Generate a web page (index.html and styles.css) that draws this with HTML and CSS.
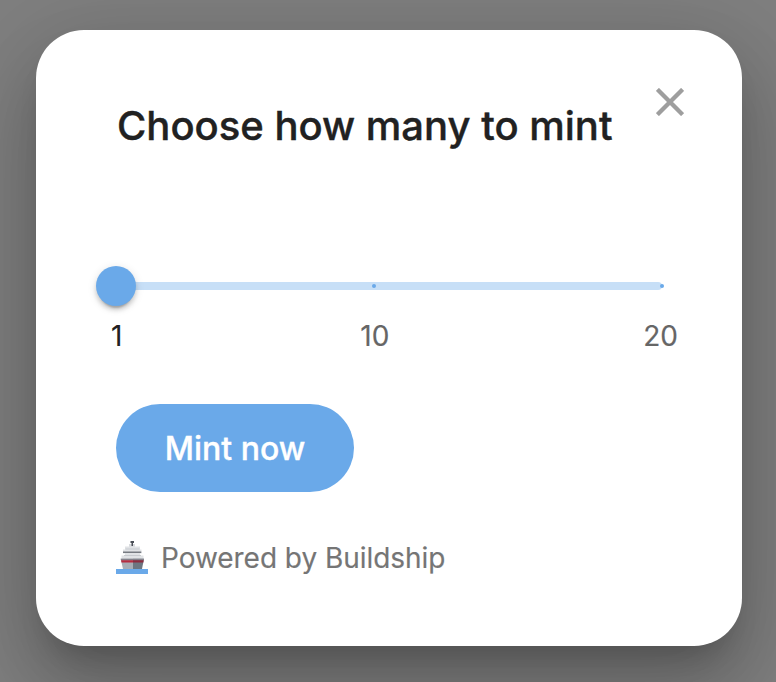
FILE: index.html
```html
<!DOCTYPE html>
<html lang="en">
<head>
<meta charset="utf-8">
<title>Choose how many to mint</title>
<link rel="stylesheet" href="styles.css">
</head>
<body>
<main class="dialog">
  <header class="header">
    <h1 class="title">Choose how many to mint</h1>
    <button class="close" aria-label="Close"><svg width="28" height="28" viewBox="0 0 28 28"><path d="M1.4 1.4 26.6 26.6M26.6 1.4 1.4 26.6"/></svg></button>
  </header>
  <div class="slider">
    <div class="rail"><i class="mark mid"></i><i class="mark end"></i><span class="thumb"></span></div>
    <div class="labels"><span class="active">1</span><span class="ten">10</span><span>20</span></div>
  </div>
  <button class="mint">Mint now</button>
  <footer class="footer">
    <svg class="ship" width="32" height="33" viewBox="0 0 32 33">
      <path fill="#d9dbdf" d="M13 3h6v3h-6z"/>
      <path fill="#4b4f57" d="M14.500 0h3.500v2h-1v3h-1.500V2h-1z"/>
      <path fill="#e1e3e6" d="M9 5.500h15v3h1.500v4H24v2h3.500v3.500h-22v-3.500H9v-2H7v-4h2z"/>
      <path fill="#c8cbd0" d="M9.500 7.500h14v1h-14zM8 14h17v1H8z"/>
      <path fill="#777b82" d="M7 10.500h18.300V12H7z"/>
      <path fill="#a8adb5" d="M4.700 17.700H17V28H7z"/>
      <path fill="#6c7681" d="M17 17.700h11L26 28h-9z"/>
      <path fill="#85828b" d="M4.700 17.700H28l-.3 1.600H5z"/>
      <path fill="#b62c40" d="M5 19.300h12v2.200H5.500z"/>
      <path fill="#8d2b3e" d="M17 19.300h10.700l-.4 2.200H17z"/>
      <path fill="#6aa9e9" d="M0 28h32v5H0z"/>
    </svg>
    <span>Powered by Buildship</span>
  </footer>
</main>
</body>
</html>
```
FILE: styles.css
```css
* { box-sizing: border-box; }
body { margin: 0; height: 682px; overflow: hidden; background: #7f7f7f; padding: 30px 34px 0 36px; font-family: Inter, sans-serif; }
.dialog { width: 706px; height: 616px; padding: 58px 58px 0 80px; border-radius: 48px; background: #fff; box-shadow: 0 22px 30px -14px rgba(0,0,0,.2), 0 48px 76px 6px rgba(0,0,0,.14), 0 18px 92px 16px rgba(0,0,0,.12); }
.header { display: flex; justify-content: space-between; }
.title { margin: 12px 0 0 1px; font-size: 40px; line-height: 52px; font-weight: 500; color: #212121; white-space: nowrap; -webkit-text-stroke: .4px currentColor; }
.close { width: 28px; height: 28px; padding: 0; border: 0; background: none; }
.close svg { display: block; }
.close path { fill: none; stroke: #9e9e9e; stroke-width: 4.3; }
.slider { width: 546px; margin-top: 130px; }
.rail { position: relative; height: 8px; border-radius: 4px; background: #c7dff7; }
.mark { position: absolute; top: 2px; width: 4px; height: 4px; border-radius: 50%; background: #6aa9e9; }
.mid { left: 256px; }
.end { left: 544px; }
.thumb { position: absolute; left: -20px; top: -16px; width: 40px; height: 40px; border-radius: 50%; background: #6aa9e9; box-shadow: 0 6px 2px -4px rgba(0,0,0,.2), 0 4px 4px rgba(0,0,0,.14), 0 2px 10px rgba(0,0,0,.12); }
.labels { display: flex; justify-content: space-between; margin: 28px -16px 0 -5px; font-size: 28px; line-height: 36px; color: #666; -webkit-text-stroke: .15px currentColor; }
.labels .active { color: #212121; }
.labels .ten { margin-right: 16px; }
.mint { display: block; margin-top: 50px; width: 238px; height: 88px; padding: 2px 0 0; border: 0; border-radius: 44px; background: #6aa9e9; color: #fff; font: 500 32px/86px Inter, sans-serif; -webkit-text-stroke: .35px currentColor; }
.footer { display: flex; align-items: center; gap: 13px; margin-top: 48px; color: #757575; font-size: 28px; line-height: 36px; letter-spacing: -.04px; white-space: nowrap; -webkit-text-stroke: .15px currentColor; }
.ship { margin-top: -1px; }
```
